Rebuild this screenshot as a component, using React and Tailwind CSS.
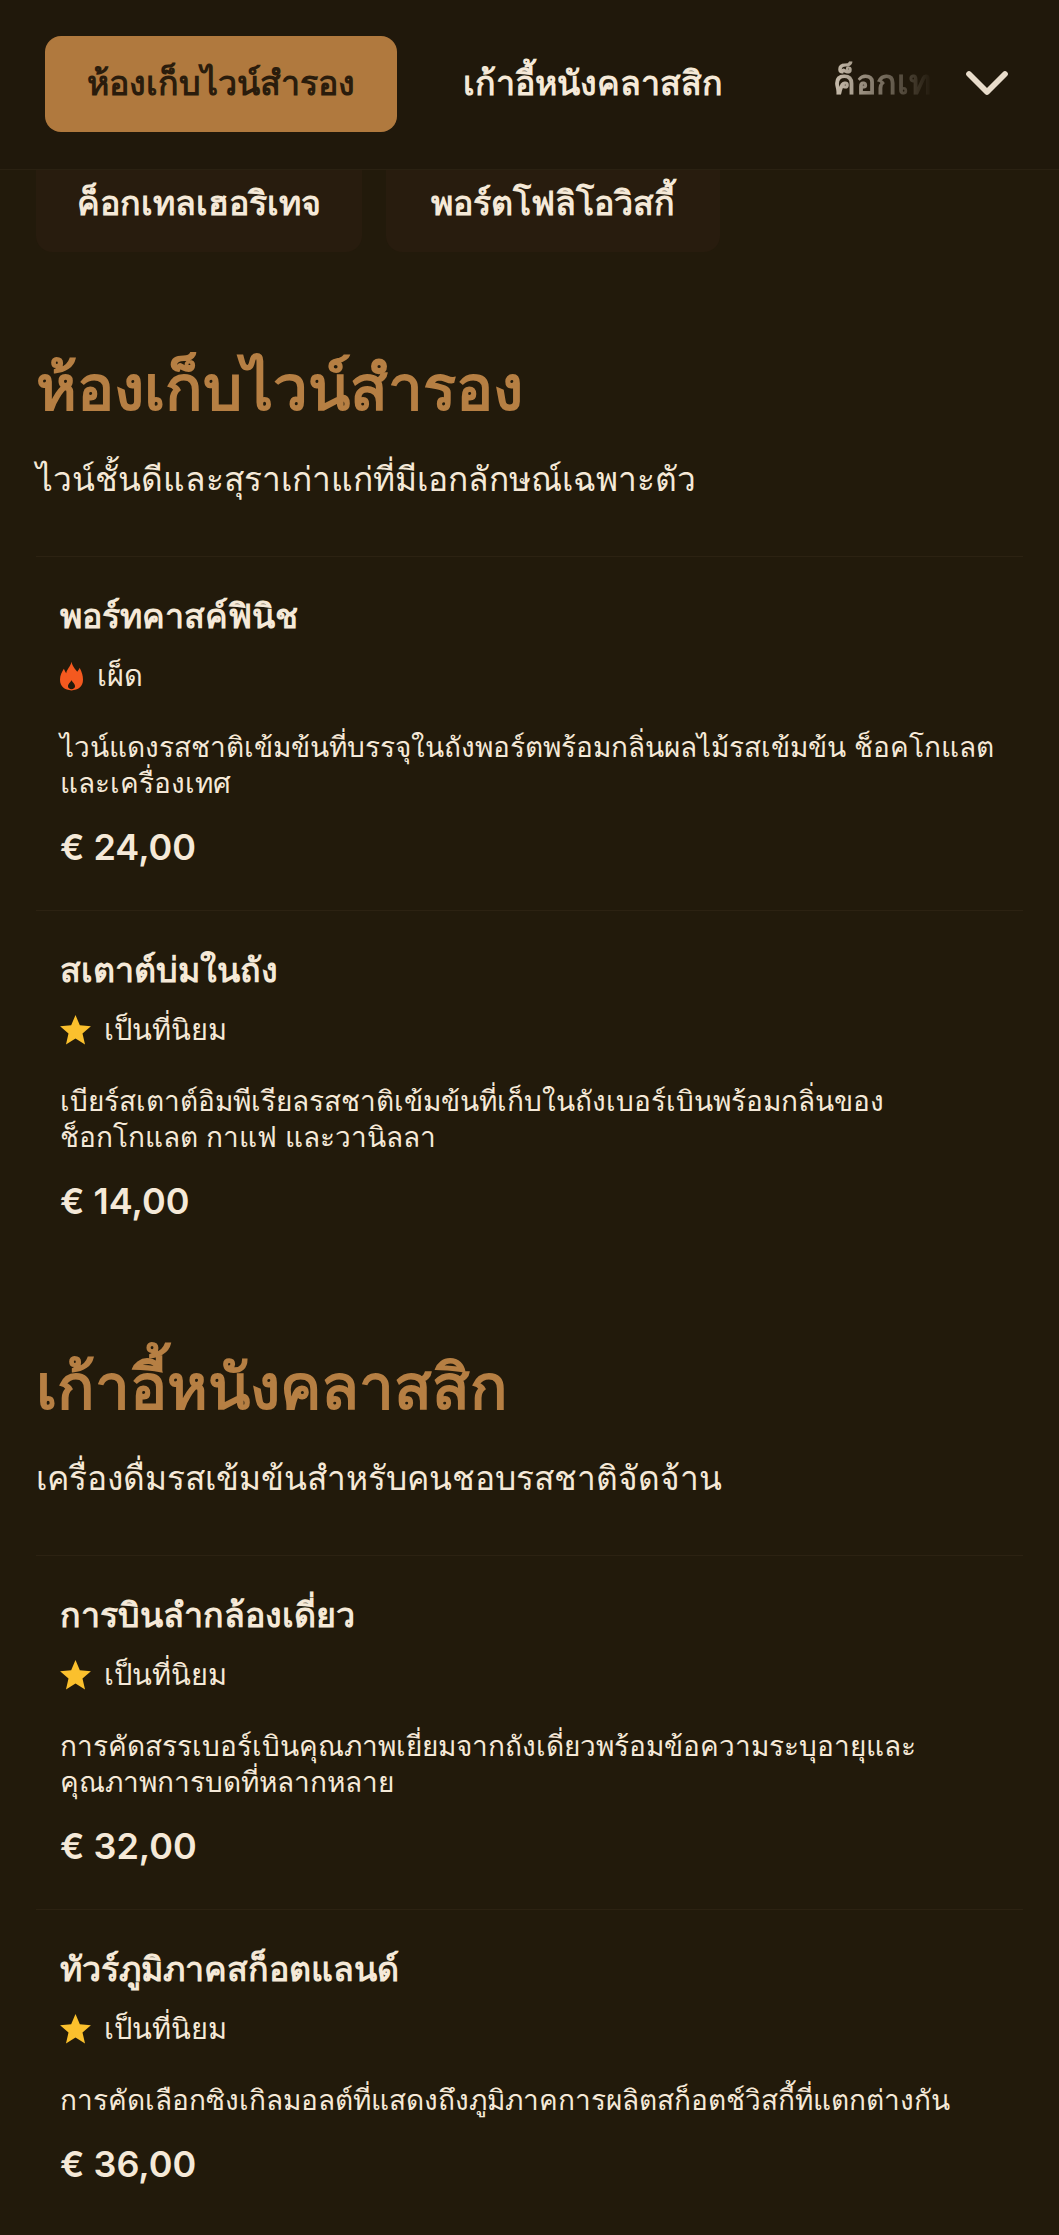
import React from 'react'
import { ChevronDown } from 'lucide-react'
import { MdStar } from 'react-icons/md'

const sections = [
  {
    title: 'ห้องเก็บไวน์สำรอง',
    subtitle: 'ไวน์ชั้นดีและสุราเก่าแก่ที่มีเอกลักษณ์เฉพาะตัว',
    items: [
      {
        name: 'พอร์ทคาสค์ฟินิช',
        tag: 'spicy',
        desc: ['ไวน์แดงรสชาติเข้มข้นที่บรรจุในถังพอร์ตพร้อมกลิ่นผลไม้รสเข้มข้น ช็อคโกแลต', 'และเครื่องเทศ'],
        price: '€ 24,00',
      },
      {
        name: 'สเตาต์บ่มในถัง',
        tag: 'popular',
        desc: ['เบียร์สเตาต์อิมพีเรียลรสชาติเข้มข้นที่เก็บในถังเบอร์เบินพร้อมกลิ่นของ', 'ช็อกโกแลต กาแฟ และวานิลลา'],
        price: '€ 14,00',
      },
    ],
  },
  {
    title: 'เก้าอี้หนังคลาสสิก',
    subtitle: 'เครื่องดื่มรสเข้มข้นสำหรับคนชอบรสชาติจัดจ้าน',
    items: [
      {
        name: 'การบินลำกล้องเดี่ยว',
        tag: 'popular',
        desc: ['การคัดสรรเบอร์เบินคุณภาพเยี่ยมจากถังเดี่ยวพร้อมข้อความระบุอายุและ', 'คุณภาพการบดที่หลากหลาย'],
        price: '€ 32,00',
      },
      {
        name: 'ทัวร์ภูมิภาคสก็อตแลนด์',
        tag: 'popular',
        desc: ['การคัดเลือกซิงเกิลมอลต์ที่แสดงถึงภูมิภาคการผลิตสก็อตช์วิสกี้ที่แตกต่างกัน'],
        price: '€ 36,00',
      },
    ],
  },
]

const Flame = () => (
  <svg viewBox="0 0 24 30" className="w-[23px] h-[30px] text-[#f4591f]" fill="currentColor" fillRule="evenodd">
    <path d="M12 0C13 5 16 7.5 18 10.5C19 9 20 8.5 20.5 6.5C23 11 24 15 24 19C24 26 19 30 12 30C5 30 0 26 0 19C0 14 2 11 4 7.5C5 9.5 5.5 11 6.5 12C7 8 11 5 12 0ZM12 19.5C10.5 22 8.3 23.5 8.3 25.5C8.3 27.7 10 28.8 12 28.8C14 28.8 15.7 27.7 15.7 25.5C15.7 23.5 13.5 22 12 19.5Z" />
  </svg>
)

const Tag = ({ type }) => {
  if (type === 'spicy') {
    return (
      <div className="flex items-center gap-[14px] h-[36px]">
        <Flame />
        <span className="text-[29px] text-[#f5e9d8]">เผ็ด</span>
      </div>
    )
  }
  return (
    <div className="flex items-center gap-[13px] h-[36px]">
      <MdStar className="text-[#fbc02d] w-[37px] h-[37px] -mx-[3px]" />
      <span className="text-[29px] text-[#f5e9d8]">เป็นที่นิยม</span>
    </div>
  )
}

const Item = ({ item }) => (
  <div className="border-t border-[#2c2212] px-[24px] pt-[33px] pb-[37px]">
    <h3 className="text-[34px] leading-[52px] font-semibold text-[#f5e9d8]">{item.name}</h3>
    <div className="mt-[16px]"><Tag type={item.tag} /></div>
    <p className="mt-[35px] text-[28px] leading-[36px] text-[#f5e9d8]">
      {item.desc.map((line) => (
        <span key={line} className="block whitespace-nowrap">{line}</span>
      ))}
    </p>
    <div className="mt-[20px] text-[36px] leading-[52px] font-semibold text-[#f5e9d8]">{item.price}</div>
  </div>
)

export default function App() {
  return (
    <div className="w-[1059px] h-[2235px] overflow-hidden bg-[#221a0b] font-['Inter','Noto_Sans',sans-serif]">
      <nav className="h-[170px] border-b border-[#2a2112] bg-[#20180b] flex items-start pl-[45px] pr-[50px] pt-[36px]">
        <button className="w-[352px] h-[96px] pb-[4px] shrink-0 rounded-[16px] bg-[#b0793e] text-[#2a1c0c] text-[34px] font-semibold">
          ห้องเก็บไวน์สำรอง
        </button>
        <button className="ml-[66px] h-[96px] pb-[4px] shrink-0 text-[#f5e9d8] text-[34px] font-semibold whitespace-nowrap">
          เก้าอี้หนังคลาสสิก
        </button>
        <div className="ml-[110px] w-[100px] h-[60px] overflow-hidden shrink-0 flex items-end [mask-image:linear-gradient(to_right,rgba(0,0,0,0.8),transparent)]">
          <span className="text-[#f5e9d8] text-[34px] leading-[48px] -mb-[10px] font-semibold whitespace-nowrap">ค็อกเทลเฮอริเทจ</span>
        </div>
        <ChevronDown size={72} strokeWidth={1.9} className="ml-auto mt-[11px] -mr-[14px] text-[#e8dccb]" />
      </nav>

      <div className="h-[82px] flex items-start gap-[24px] px-[36px]">
        <div className="w-[326px] h-[82px] pb-[18px] rounded-b-[16px] bg-[#281c0e] flex items-center justify-center text-[#f5e9d8] text-[34px] font-semibold">
          ค็อกเทลเฮอริเทจ
        </div>
        <div className="w-[334px] h-[82px] pb-[18px] rounded-b-[16px] bg-[#281c0e] flex items-center justify-center text-[#f5e9d8] text-[34px] font-semibold">
          พอร์ตโฟลิโอวิสกี้
        </div>
      </div>

      <main className="px-[36px] pt-[91px]">
        {sections.map((s) => (
          <section key={s.title} className="mb-[78px]">
            <h2 className="text-[62px] leading-[90px] font-bold text-[#b67f43]">{s.title}</h2>
            <p className="mt-[21px] text-[33.5px] leading-[50px] text-[#f5e9d8]">{s.subtitle}</p>
            <div className="mt-[52px]">
              {s.items.map((item) => (
                <Item key={item.name} item={item} />
              ))}
            </div>
          </section>
        ))}
      </main>
    </div>
  )
}
